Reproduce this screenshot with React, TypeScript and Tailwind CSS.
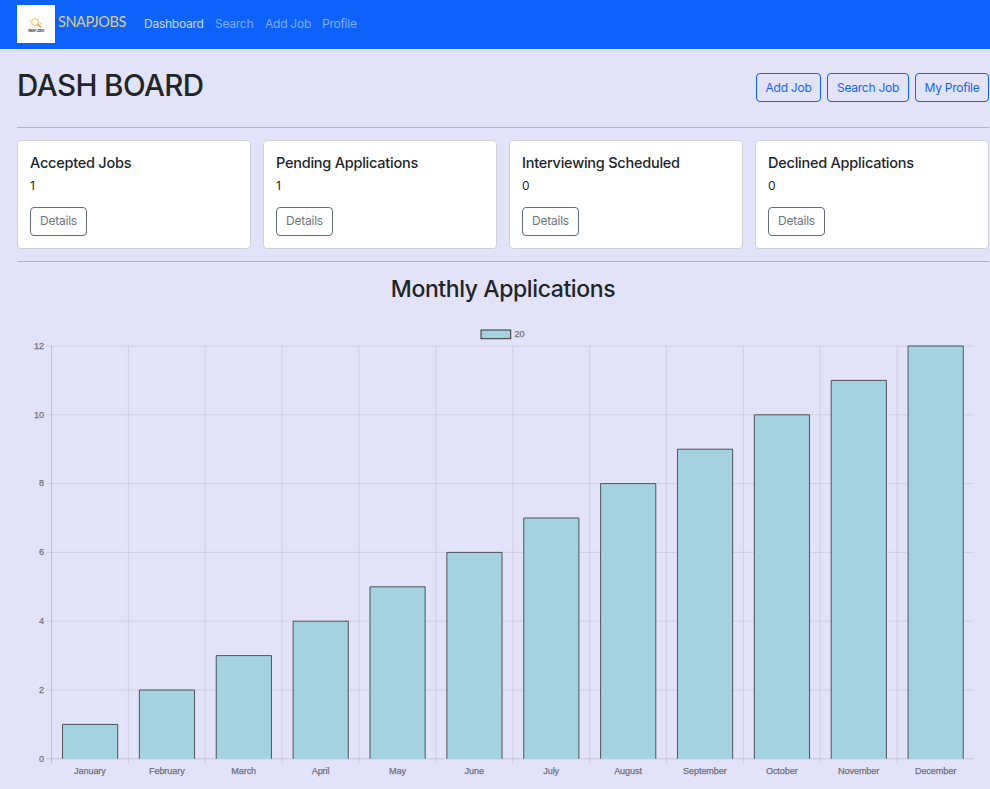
const cards = [
  { title: 'Accepted Jobs', value: 1 },
  { title: 'Pending Applications', value: 1 },
  { title: 'Interviewing Scheduled', value: 0 },
  { title: 'Declined Applications', value: 0 },
];

const months = ['January', 'February', 'March', 'April', 'May', 'June', 'July', 'August', 'September', 'October', 'November', 'December'];

const LEFT = 51.5;
const STEP = 76.87;
const BASE = 758.8;
const UNIT = 34.4;

function Logo() {
  return (
    <svg className="size-[38px] bg-white" viewBox="0 0 38 38">
      <circle cx="18" cy="17" r="3.5" fill="#fff8ec" stroke="#f7bf70" strokeWidth="1" />
      <path d="M20.8 19.5l3 2.5" stroke="#f5ad50" strokeWidth="1.8" strokeLinecap="round" />
      <path d="M12 15.2h1.5M13.5 19.5l1-.8M22.5 18.5h2" stroke="#f7bd70" strokeWidth="1" />
      <text x="11" y="26.6" textLength="16" lengthAdjust="spacingAndGlyphs" fontSize="3" fontWeight="700" fill="#35323c">SNAP JOBS</text>
    </svg>
  );
}

function Label({ x, y, anchor, children }: { x: number; y: number; anchor: 'start' | 'middle' | 'end'; children: string | number }) {
  return (
    <text x={x} y={y} textAnchor={anchor} fill="#72727b" stroke="#72727b" strokeWidth="0.25">
      {children}
    </text>
  );
}

function Chart() {
  return (
    <svg className="block h-[479px] w-[990px] tracking-[-0.1px]" viewBox="0 310 990 479" fontFamily='"Liberation Sans", Arial, sans-serif' fontSize="9.1">
      <rect x="481" y="330" width="29.7" height="8.7" fill="#a5d2e1" stroke="#333" strokeWidth="1" />
      <Label x={514.5} y={337.3} anchor="start">20</Label>
      {[0, 2, 4, 6, 8, 10, 12].map((n) => (
        <g key={n}>
          <path d={`M46 ${BASE - n * UNIT}H973.8`} stroke="#000" strokeOpacity={n === 0 ? 0.15 : 0.1} strokeWidth="0.8" />
          <Label x={44} y={BASE - n * UNIT + 2.8} anchor="end">{n}</Label>
        </g>
      ))}
      {months.map((m, i) => {
        const x = LEFT + i * STEP;
        const top = BASE - (i + 1) * UNIT;
        return (
          <g key={m}>
            <path d={`M${x} 346V764`} stroke="#000" strokeOpacity={i === 0 ? 0.18 : 0.1} strokeWidth="0.8" />
            <rect x={x + 11} y={top} width="55.2" height={BASE - top} fill="#a5d2e1" />
            <path d={`M${x + 11} ${BASE}V${top}H${x + 66.2}V${BASE}`} fill="none" stroke="#222" strokeOpacity="0.9" strokeWidth="0.8" />
            <Label x={x + STEP / 2} y={774.3} anchor="middle">{m}</Label>
          </g>
        );
      })}
    </svg>
  );
}

export default function App() {
  return (
    <div className="flex h-[789px] w-[990px] flex-col overflow-hidden bg-[#e2e2f8] font-['Inter',sans-serif] text-[12px] tracking-[-0.25px] text-[#212529]">
      <nav className="flex h-[49px] shrink-0 items-center bg-[#0d62fb] pl-[17px] pb-px">
        <Logo />
        <span className="ml-[3px] mr-[18px] w-[68px] whitespace-nowrap pb-1 font-['Lato',sans-serif] text-[14.5px] leading-5 tracking-[-0.42px] text-[#dfcb86]">SNAPJOBS</span>
        <div className="flex gap-3 whitespace-nowrap leading-[18px] text-[#83aef9]">
          <span className="w-[59px] text-[#c9dcfc]">Dashboard</span>
          <span className="w-[38px]">Search</span>
          <span className="w-[45px]">Add Job</span>
          <span>Profile</span>
        </div>
      </nav>
      <header className="ml-[17px] mr-px flex h-[79px] shrink-0 items-start justify-between border-b border-[#b2b3c6] pt-[18px]">
        <h1 className="-mt-px text-[29.5px] font-[450] leading-[38px] tracking-[-0.55px]">DASH BOARD</h1>
        <div className="flex gap-1.5 pt-[6px]">
          <button className="h-[29px] w-[65px] whitespace-nowrap rounded-[4px] border border-[#0d62fb] text-[#1366f2]">Add Job</button>
          <button className="h-[29px] w-[82px] whitespace-nowrap rounded-[4px] border border-[#0d62fb] text-[#1366f2]">Search Job</button>
          <button className="h-[29px] w-[74px] whitespace-nowrap rounded-[4px] border border-[#0d62fb] text-[#1366f2]">My Profile</button>
        </div>
      </header>
      <section className="ml-[17px] mr-px grid h-[134px] shrink-0 grid-cols-4 gap-3 border-b border-[#b2b3c6] py-3">
        {cards.map((c) => (
          <article key={c.title} className="flex flex-col items-start rounded-[4px] border border-[#d0d0d4] bg-white px-3 pt-3">
            <h2 className="whitespace-nowrap text-[14.5px] font-medium leading-5 tracking-[-0.24px]">{c.title}</h2>
            <p className="mt-1 leading-[18px]">{c.value}</p>
            <button className="mt-3 h-[29px] w-[57px] rounded-[4px] border border-[#646d75] pb-px text-[#6c757d]">Details</button>
          </article>
        ))}
      </section>
      <h2 className="ml-[17px] mr-px h-[48px] shrink-0 pt-3 text-center text-[23px] font-medium leading-[30px] tracking-[-0.4px]">Monthly Applications</h2>
      <Chart />
    </div>
  );
}
